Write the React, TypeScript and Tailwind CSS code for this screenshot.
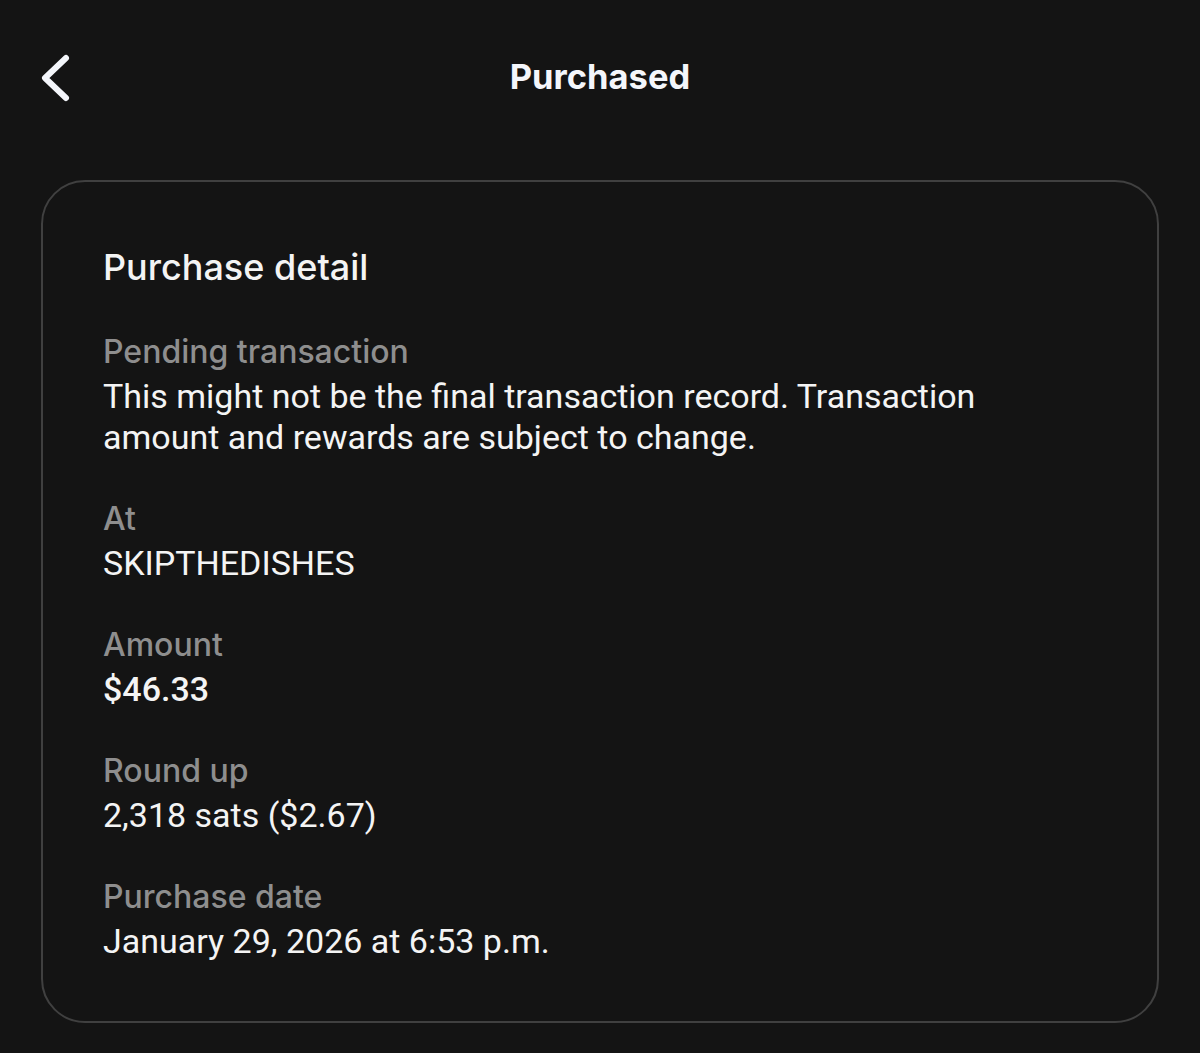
import React from "react";

const Field = ({ label, value, bold }: { label: string; value: React.ReactNode; bold?: boolean }) => (
  <div className="flex flex-col">
    <div
      className="text-[32px] leading-[44px] font-medium text-[#8e8e8e]"
      style={{ fontFamily: "Inter, 'Open Sans', sans-serif" }}
    >
      {label}
    </div>
    <div
      className={`pt-[2px] text-[34px] leading-[41px] text-[#f4f4f4] ${bold ? "font-medium" : "font-normal"}`}
      style={{ fontFamily: "Roboto, 'Liberation Sans', sans-serif" }}
    >
      {value}
    </div>
  </div>
);

export default function App() {
  return (
    <div className="w-[1200px] h-[1053px] bg-[#141414] overflow-hidden flex flex-col">
      <div className="relative h-[155px] flex items-start justify-center pt-[55px]">
        <svg
          className="absolute left-[36px] top-[52px]"
          width="40"
          height="52"
          viewBox="0 0 40 52"
          fill="none"
        >
          <path d="M30 6 L9 26 L30 46" stroke="#f4f6fb" strokeWidth="6" strokeLinecap="round" strokeLinejoin="round" />
        </svg>
        <div
          className="text-[34.5px] leading-[44px] font-bold text-[#f4f6fb]"
          style={{ fontFamily: "Inter, 'Open Sans', sans-serif" }}
        >
          Purchased
        </div>
      </div>
      <div className="mx-[41px] mt-[25px] h-[843px] rounded-[44px] border-2 border-[#404040] bg-[#141414] px-[60px] pt-[63px]">
        <div
          className="text-[36px] leading-[44px] font-medium text-[#f4f4f4]"
          style={{ fontFamily: "Inter, 'Open Sans', sans-serif" }}
        >
          Purchase detail
        </div>
        <div className="mt-[41px] flex flex-col gap-[39px]">
          <Field
            label="Pending transaction"
            value={
              <>
                This might not be the final transaction record. Transaction
                <br />
                amount and rewards are subject to change.
              </>
            }
          />
          <Field label="At" value="SKIPTHEDISHES" />
          <Field label="Amount" value="$46.33" bold />
          <Field label="Round up" value="2,318 sats ($2.67)" />
          <Field label="Purchase date" value="January 29, 2026 at 6:53 p.m." />
        </div>
      </div>
    </div>
  );
}
